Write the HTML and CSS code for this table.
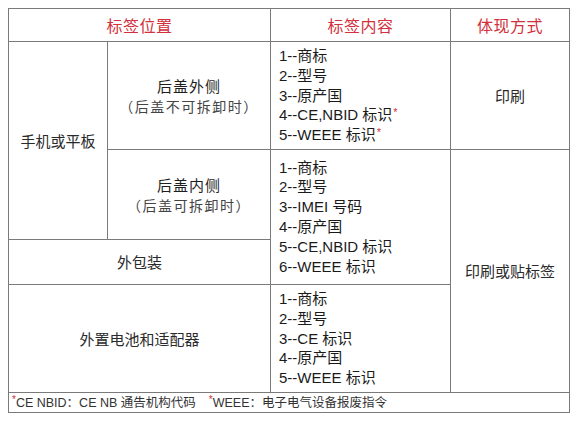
FILE: index.html
```html
<!DOCTYPE html>
<html lang="zh">
<head>
<meta charset="utf-8">
<link rel="stylesheet" href="styles.css">
</head>
<body>
<table class="spec">
  <colgroup>
    <col class="c1"><col class="c2"><col class="c3"><col class="c4">
  </colgroup>
  <tr class="r-head">
    <th colspan="2">标签位置</th>
    <th>标签内容</th>
    <th>体现方式</th>
  </tr>
  <tr class="r1">
    <td rowspan="2" class="center">手机或平板</td>
    <td class="center"><div class="main">后盖外侧</div><div class="sub">（后盖不可拆卸时）</div></td>
    <td class="list">
      <div>1--商标</div>
      <div>2--型号</div>
      <div>3--原产国</div>
      <div>4--CE,NBID 标识<sup class="star">*</sup></div>
      <div>5--WEEE 标识<sup class="star">*</sup></div>
    </td>
    <td class="center">印刷</td>
  </tr>
  <tr class="r2">
    <td class="center"><div class="main">后盖内侧</div><div class="sub">（后盖可拆卸时）</div></td>
    <td rowspan="2" class="list">
      <div>1--商标</div>
      <div>2--型号</div>
      <div>3--IMEI 号码</div>
      <div>4--原产国</div>
      <div>5--CE,NBID 标识</div>
      <div>6--WEEE 标识</div>
    </td>
    <td rowspan="3" class="center">印刷或贴标签</td>
  </tr>
  <tr class="r3">
    <td colspan="2" class="center">外包装</td>
  </tr>
  <tr class="r4">
    <td colspan="2" class="center">外置电池和适配器</td>
    <td class="list">
      <div>1--商标</div>
      <div>2--型号</div>
      <div>3--CE 标识</div>
      <div>4--原产国</div>
      <div>5--WEEE 标识</div>
    </td>
  </tr>
  <tr class="r-foot">
    <td colspan="4" class="note"><span class="star">*</span>CE NBID：CE NB 通告机构代码<span class="gap"></span><span class="star">*</span>WEEE：电子电气设备报废指令</td>
  </tr>
</table>
</body>
</html>
```

FILE: styles.css
```css
html, body {
  margin: 0;
  padding: 0;
  background: #ffffff;
}
body {
  padding: 8px 0 0 8px;
  font-family: "Liberation Sans", "Noto Sans CJK SC", sans-serif;
  color: #222222;
}
.spec {
  border-collapse: collapse;
  table-layout: fixed;
  width: 561px;
}
.c1 { width: 99px; }
.c2 { width: 163px; }
.c3 { width: 180px; }
.c4 { width: 119px; }
.spec th, .spec td {
  border: 1px solid #7a7a7a;
  padding: 0;
}
.spec th {
  font-weight: normal;
  color: #d2303c;
  font-size: 16px;
  font-family: "Noto Sans CJK SC", sans-serif;
  text-align: center;
  vertical-align: middle;
  letter-spacing: 0.5px;
}
.r-head { height: 33px; }
.r1 { height: 108px; }
.r2 { height: 90px; }
.r3 { height: 45px; }
.r4 { height: 108px; }
.r-foot { height: 20px; }
.spec .center {
  text-align: center;
  vertical-align: middle;
  font-size: 15px;
  font-family: "Noto Sans CJK SC", sans-serif;
  line-height: 20px;
  color: #2a2a2a;
}
.main {
  letter-spacing: 1px;
  color: #1e1e1e;
}
.sub {
  font-size: 14px;
  letter-spacing: 1.5px;
  color: #444444;
}
.spec .list {
  vertical-align: middle;
  font-size: 15px;
  line-height: 19.8px;
  padding-left: 8px;
  color: #1a1a1a;
}
.star {
  color: #d2303c;
  font-size: 11px;
  vertical-align: top;
  line-height: 0;
  position: relative;
  top: 7px;
  margin-left: 1px;
}
.spec .note {
  font-size: 12.5px;
  line-height: 18px;
  padding-left: 3px;
  color: #333333;
  white-space: nowrap;
}
.note .star {
  top: 6px;
  font-size: 10px;
  margin-left: 0;
}
.gap {
  display: inline-block;
  width: 13px;
}
```
